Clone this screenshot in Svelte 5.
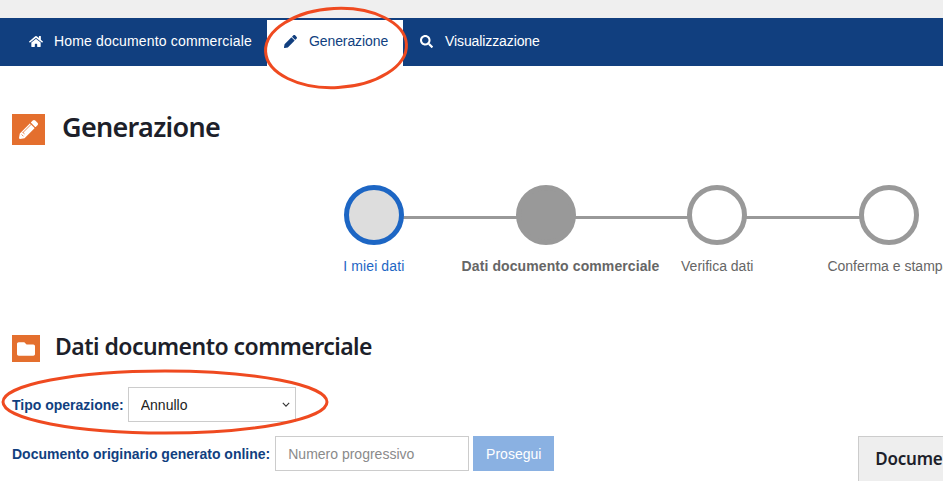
<script>
  const pencil = "M497.9 142.1l-46.1 46.1c-4.7 4.7-12.3 4.7-17 0l-111-111c-4.7-4.7-4.7-12.3 0-17l46.1-46.1c18.7-18.7 49.1-18.7 67.9 0l60.1 60.1c18.8 18.7 18.8 49.1 0 67.9zM284.2 99.8L21.6 362.4.4 483.9c-2.9 16.4 11.4 30.6 27.8 27.8l121.5-21.3 262.6-262.6c4.7-4.7 4.7-12.3 0-17l-111-111c-4.8-4.7-12.4-4.7-17.1 0z"
  const home = "M280.37 148.26L96 300.11V464a16 16 0 0 0 16 16l112.06-.29a16 16 0 0 0 15.92-16V368a16 16 0 0 1 16-16h64a16 16 0 0 1 16 16v95.64a16 16 0 0 0 16 16.05L464 480a16 16 0 0 0 16-16V300L295.67 148.26a12.19 12.19 0 0 0-15.3 0zM571.6 251.47L488 182.56V44.05a12 12 0 0 0-12-12h-56a12 12 0 0 0-12 12v72.61L318.47 43a48 48 0 0 0-61 0L4.34 251.47a12 12 0 0 0-1.6 16.9l25.5 31A12 12 0 0 0 45.15 301l235.22-193.74a12.19 12.19 0 0 1 15.3 0L530.9 301a12 12 0 0 0 16.9-1.6l25.5-31a12 12 0 0 0-1.7-16.93z"
  const search = "M505 442.7L405.3 343c-4.5-4.5-10.6-7-17-7H372c27.6-35.3 44-79.7 44-128C416 93.1 322.9 0 208 0S0 93.1 0 208s93.1 208 208 208c48.3 0 92.7-16.4 128-44v16.3c0 6.4 2.5 12.5 7 17l99.7 99.7c9.4 9.4 24.6 9.4 33.9 0l28.3-28.3c9.4-9.4 9.4-24.6.1-34zM208 336c-70.7 0-128-57.2-128-128 0-70.7 57.2-128 128-128 70.7 0 128 57.2 128 128 0 70.7-57.2 128-128 128z"
  const folder = "M464 128H272l-64-64H48C21.49 64 0 85.49 0 112v288c0 26.51 21.49 48 48 48h416c26.51 0 48-21.49 48-48V176c0-26.51-21.49-48-48-48z"

  const steps = [
    { label: "I miei dati", cls: "current" },
    { label: "Dati documento commerciale", cls: "active" },
    { label: "Verifica dati", cls: "" },
    { label: "Conferma e stampa", cls: "" }
  ]
</script>

<div class="page">
  <div class="topbar"></div>

  <nav class="nav">
    <a class="item home-item" href="#home">
      <svg class="ico home-ico" viewBox="0 0 576 512"><path d={home} /></svg>
      Home documento commerciale
    </a>
    <a class="item tab" href="#gen">
      <svg class="ico pen-ico" viewBox="0 0 512 512"><path d={pencil} /></svg>
      Generazione
    </a>
    <a class="item search-item" href="#vis">
      <svg class="ico" viewBox="0 0 512 512"><path d={search} /></svg>
      Visualizzazione
    </a>
  </nav>

  <header class="title">
    <span class="badge big">
      <svg viewBox="0 0 512 512">
        <path d={pencil} />
        <path class="cut" d="M95 350L340 105M70 390l50 50M150 375l-45-40" />
      </svg>
    </span>
    <h1>Generazione</h1>
  </header>

  <ol class="stepper">
    {#each steps as step, i}
      <li class="step {step.cls}">
        <div class="track">
          {#if i < steps.length - 1}<span class="line"></span>{/if}
          <span class="dot"></span>
        </div>
        <span class="label">{step.label}</span>
      </li>
    {/each}
  </ol>

  <section class="section">
    <span class="badge small">
      <svg viewBox="0 0 512 512"><path d={folder} /></svg>
    </span>
    <h2>Dati documento commerciale</h2>
  </section>

  <div class="row first">
    <label for="tipo">Tipo operazione:</label>
    <div class="select">
      <select id="tipo">
        <option>Annullo</option>
      </select>
      <svg viewBox="0 0 10 6"><path d="M1 1l4 4 4-4" /></svg>
    </div>
  </div>

  <div class="row second">
    <label for="num">Documento originario generato online:</label>
    <input id="num" type="text" placeholder="Numero progressivo" />
    <button>Prosegui</button>
    <aside class="side">Documento</aside>
  </div>

  <svg class="marks" viewBox="0 0 943 481">
    <ellipse cx="336" cy="48" rx="70.5" ry="39.5" transform="rotate(-3 336 48)" />
    <ellipse cx="165" cy="402" rx="162" ry="31" />
  </svg>
</div>

<style>
  :global(body) {
    margin: 0;
    background: #fff;
  }
  .page {
    position: relative;
    width: 943px;
    height: 481px;
    overflow: hidden;
    font-family: "Liberation Sans", Arial, sans-serif;
  }
  .topbar {
    height: 18px;
    background: #efefef;
  }
  .nav {
    display: flex;
    height: 48px;
    background: #113f7f;
  }
  .item {
    display: flex;
    align-items: center;
    box-sizing: border-box;
    height: 48px;
    padding-bottom: 2px;
    color: #fff;
    font-size: 14px;
    letter-spacing: -0.1px;
    text-decoration: none;
    white-space: nowrap;
  }
  .ico {
    width: 13px;
    height: 13px;
    fill: currentColor;
  }
  .home-item {
    width: 267px;
    padding-left: 29px;
    gap: 11px;
    letter-spacing: 0.16px;
  }
  .home-ico {
    width: 14px;
  }
  .tab {
    width: 136px;
    height: 46px;
    margin-top: 2px;
    padding-left: 17px;
    padding-bottom: 4px;
    gap: 12px;
    background: #fff;
    color: #113f7f;
  }
  .search-item {
    padding-left: 17px;
    gap: 12px;
  }
  .title {
    display: flex;
    align-items: center;
    gap: 17px;
    margin: 48px 0 0 12px;
    height: 31px;
  }
  h1,
  h2 {
    margin: 0;
    color: #1d1f2a;
    font-family: "Noto Sans", sans-serif;
    font-weight: 600;
    white-space: nowrap;
  }
  h1 {
    margin-top: -6px;
    font-size: 27px;
    letter-spacing: -0.7px;
  }
  h2 {
    margin-top: -5px;
    font-size: 23px;
    letter-spacing: -0.54px;
  }
  .badge {
    display: flex;
    align-items: center;
    justify-content: center;
    background: #e46f2e;
    flex-shrink: 0;
  }
  .badge svg {
    fill: #fff;
  }
  .badge.big {
    width: 33px;
    height: 31px;
  }
  .badge.big svg {
    width: 19px;
    height: 19px;
  }
  .cut {
    fill: none;
    stroke: #e46f2e;
    stroke-width: 22;
  }
  .badge.small {
    width: 28px;
    height: 27px;
  }
  .badge.small svg {
    width: 18px;
    height: 18px;
  }
  .stepper {
    display: flex;
    list-style: none;
    margin: 40px 0 0 288px;
    padding: 0;
  }
  .step {
    flex: 0 0 171.7px;
    min-width: 0;
    display: flex;
    flex-direction: column;
    align-items: center;
    color: #666;
    font-size: 14px;
  }
  .track {
    position: relative;
    width: 100%;
    height: 60px;
    display: flex;
    justify-content: center;
  }
  .line {
    position: absolute;
    top: 31px;
    left: 50%;
    width: 100%;
    height: 3px;
    background: #999;
  }
  .dot {
    position: relative;
    box-sizing: border-box;
    width: 60px;
    height: 60px;
    border: 5px solid #999;
    border-radius: 50%;
    background: #fff;
  }
  .current .dot {
    border-color: #1d66c4;
    background: #ddd;
  }
  .active .dot {
    background: #999;
  }
  .label {
    margin-top: 13px;
    white-space: nowrap;
  }
  .current .label {
    color: #1d66c4;
    letter-spacing: 0.1px;
  }
  .active .label {
    padding-left: 30px;
    font-weight: bold;
    letter-spacing: 0.1px;
  }
  .section {
    display: flex;
    align-items: center;
    gap: 15px;
    margin: 61px 0 0 12px;
    height: 27px;
  }
  .row {
    display: flex;
    align-items: center;
    height: 35px;
    margin-left: 12px;
    white-space: nowrap;
  }
  .first {
    margin-top: 25px;
  }
  .second {
    margin-top: 14px;
  }
  label {
    flex-shrink: 0;
    color: #113f7f;
    font-size: 14px;
    font-weight: bold;
  }
  .select {
    position: relative;
    margin-left: 4px;
  }
  .select select {
    display: block;
    box-sizing: border-box;
    width: 168px;
    height: 35px;
    padding: 0 12px;
    border: 1px solid #ccc;
    background: #fff;
    color: #222;
    font: 14px "Liberation Sans", Arial, sans-serif;
    appearance: none;
    border-radius: 0;
  }
  .select svg {
    position: absolute;
    top: 15px;
    right: 6px;
    width: 8px;
    height: 5px;
    fill: none;
    stroke: #333;
    stroke-width: 1.4;
    pointer-events: none;
  }
  input {
    flex-shrink: 0;
    box-sizing: border-box;
    width: 194px;
    height: 35px;
    margin-left: 5px;
    padding: 0 12px;
    border: 1px solid #ccc;
    border-radius: 0;
    font: 14px "Liberation Sans", Arial, sans-serif;
  }
  input::placeholder {
    color: #8a8a8a;
    opacity: 1;
  }
  button {
    flex-shrink: 0;
    width: 81px;
    height: 35px;
    margin-left: 4px;
    padding: 0;
    border: 0;
    background: #8ab1e2;
    color: #fff;
    font: 14px "Liberation Sans", Arial, sans-serif;
  }
  .side {
    flex-shrink: 0;
    align-self: flex-start;
    box-sizing: border-box;
    width: 200px;
    height: 46px;
    margin-left: 304px;
    padding: 10px 16px;
    border: 1px solid #ccc;
    background: #eee;
    color: #1d1f2a;
    font-family: "Noto Sans", sans-serif;
    font-size: 17px;
    font-weight: 600;
    letter-spacing: -0.2px;
  }
  .marks {
    position: absolute;
    inset: 0;
    width: 943px;
    height: 481px;
    fill: none;
    stroke: #ef4a20;
    stroke-width: 3;
    pointer-events: none;
  }
</style>
